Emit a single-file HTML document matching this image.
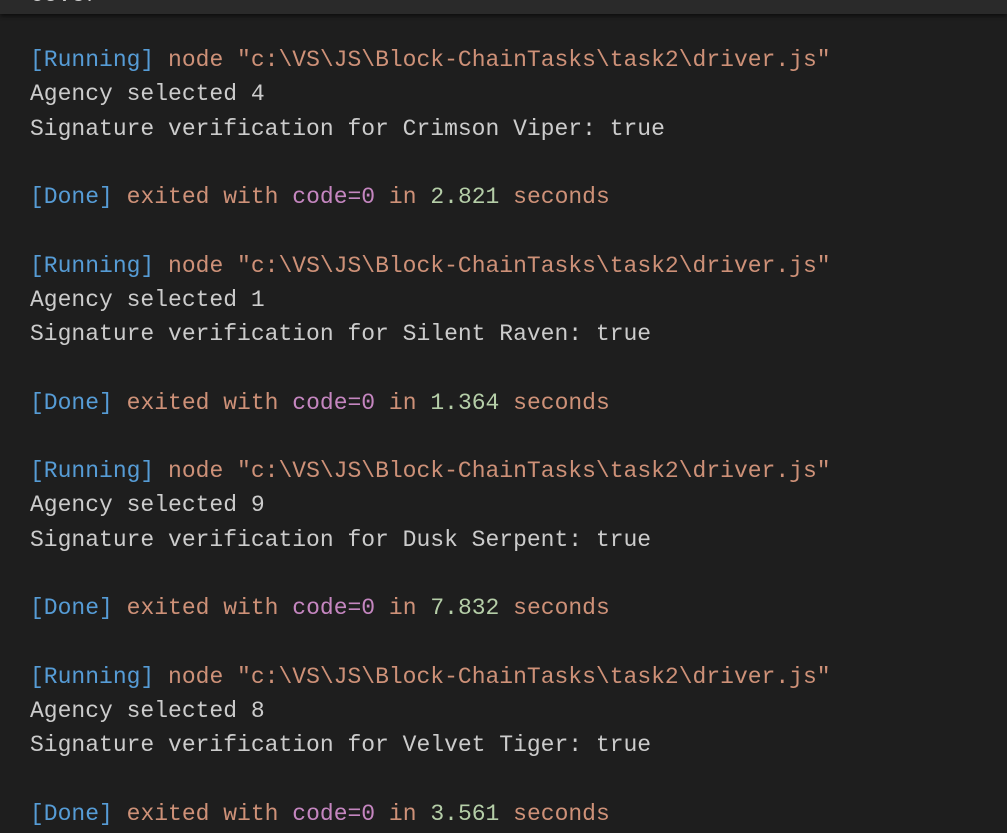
<!DOCTYPE html>
<html><head><meta charset="utf-8"><style>
html,body{margin:0;padding:0;width:1007px;height:833px;overflow:hidden;background:#1e1e1e;}
.top{position:absolute;left:0;top:0;width:1007px;height:14px;background:#2a2a2a;box-shadow:0 2px 5px rgba(0,0,0,.6);overflow:hidden;}
.top span{position:absolute;left:30px;top:-18px;font:23px "Liberation Mono",monospace;color:#cccccc;}
pre{position:absolute;left:30px;top:43px;margin:0;font:23px/34.25px "Liberation Mono",monospace;color:#cccccc;}
.b{color:#569cd6}.o{color:#ce9178}.p{color:#c586c0}.g{color:#b5cea8}
</style></head><body>
<div class="top"><span>Cover</span></div>
<pre><span class="b">[Running]</span> <span class="o">node "c:\VS\JS\Block-ChainTasks\task2\driver.js"</span>
Agency selected 4
Signature verification for Crimson Viper: true

<span class="b">[Done]</span> <span class="o">exited with</span> <span class="p">code=0</span> <span class="o">in</span> <span class="g">2.821</span> <span class="o">seconds</span>

<span class="b">[Running]</span> <span class="o">node "c:\VS\JS\Block-ChainTasks\task2\driver.js"</span>
Agency selected 1
Signature verification for Silent Raven: true

<span class="b">[Done]</span> <span class="o">exited with</span> <span class="p">code=0</span> <span class="o">in</span> <span class="g">1.364</span> <span class="o">seconds</span>

<span class="b">[Running]</span> <span class="o">node "c:\VS\JS\Block-ChainTasks\task2\driver.js"</span>
Agency selected 9
Signature verification for Dusk Serpent: true

<span class="b">[Done]</span> <span class="o">exited with</span> <span class="p">code=0</span> <span class="o">in</span> <span class="g">7.832</span> <span class="o">seconds</span>

<span class="b">[Running]</span> <span class="o">node "c:\VS\JS\Block-ChainTasks\task2\driver.js"</span>
Agency selected 8
Signature verification for Velvet Tiger: true

<span class="b">[Done]</span> <span class="o">exited with</span> <span class="p">code=0</span> <span class="o">in</span> <span class="g">3.561</span> <span class="o">seconds</span></pre>
</body></html>
